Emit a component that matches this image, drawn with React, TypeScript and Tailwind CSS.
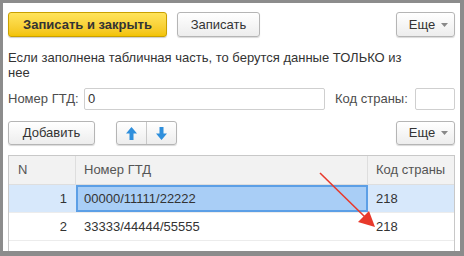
import React from "react";

const btn =
  "flex items-center justify-center h-[25px] rounded-[3px] border border-[#b5b5b5] bg-gradient-to-b from-white to-[#ededed] shadow-[0_1px_1px_rgba(0,0,0,0.15)] text-[13px] text-[#333]";

function MoreButton({ h }: { h: string }) {
  return (
    <button className={`${btn} ${h} w-[59px] gap-[6px] pl-[6px]`}>
      <span>Еще</span>
      <svg width="7" height="4" viewBox="0 0 7 4">
        <path d="M0 0h7L3.5 4z" fill="#888" />
      </svg>
    </button>
  );
}

function Arrow({ down }: { down?: boolean }) {
  return (
    <svg width="11" height="13" viewBox="0 0 11 13" className={down ? "rotate-180" : ""}>
      <path d="M5.5 0L11 6.5H7.5V13h-4V6.5H0z" fill="#2f8fdc" />
    </svg>
  );
}

const rows = [
  { n: 1, gtd: "00000/11111/22222", code: "218", selected: true },
  { n: 2, gtd: "33333/44444/55555", code: "218", selected: false },
];

export default function App() {
  return (
    <div
      className="w-[464px] h-[256px] bg-[#8c8c8c] pt-[3px] pl-[3px] pr-[4px] pb-[5px] overflow-hidden"
      style={{ fontFamily: '"Liberation Sans", Arial, sans-serif' }}
    >
      <div className="relative h-full bg-white pt-[9px] pl-[5px] pr-[5px] flex flex-col text-[13px] text-[#333]">
        <div className="flex items-center">
          <button className="flex items-center justify-center h-[25px] w-[159px] rounded-[3px] border border-[#c9a000] bg-gradient-to-b from-[#ffe45a] to-[#f3c300] shadow-[0_1px_1px_rgba(0,0,0,0.2)] font-bold text-[13px] text-[#333]">
            Записать и закрыть
          </button>
          <button className={`${btn} w-[83px] ml-[10px]`}>Записать</button>
          <div className="ml-auto">
            <MoreButton h="h-[25px]" />
          </div>
        </div>

        <div className="mt-[13px] leading-[15px] pr-[40px]">
          Если заполнена табличная часть, то берутся данные ТОЛЬКО из нее
        </div>

        <div className="mt-[8px] flex items-center h-[22px]">
          <span className="text-[#4d4d4d] w-[76px]">Номер ГТД:</span>
          <div className="h-[22px] w-[241px] border border-[#cfcfcf] rounded-[2px] flex items-center pl-[3px]">
            0
          </div>
          <span className="ml-[10px] text-[#4d4d4d]">Код страны:</span>
          <div className="ml-auto h-[22px] w-[40px] border border-[#cfcfcf] rounded-[2px]" />
        </div>

        <div className="mt-[11px] flex items-center">
          <button className={`${btn} !h-[24px] w-[87px]`}>Добавить</button>
          <div className="ml-[21px] flex h-[24px] rounded-[3px] border border-[#b5b5b5] bg-gradient-to-b from-white to-[#ededed] shadow-[0_1px_1px_rgba(0,0,0,0.15)]">
            <div className="w-[30px] flex items-center justify-center border-r border-[#c8c8c8]">
              <Arrow />
            </div>
            <div className="w-[29px] flex items-center justify-center">
              <Arrow down />
            </div>
          </div>
          <div className="ml-auto">
            <MoreButton h="!h-[24px]" />
          </div>
        </div>

        <div className="mt-[10px] flex-1 border border-[#c8c8c8] border-b-0 flex flex-col">
          <div className="flex h-[29px] bg-[#f2f2f2] border-b border-[#dedede] text-[#555]">
            <div className="w-[67px] border-r border-[#dedede] flex items-center pl-[9px]">N</div>
            <div className="w-[292px] border-r border-[#dedede] flex items-center pl-[8px]">Номер ГТД</div>
            <div className="flex-1 flex items-center pl-[8px]">Код страны</div>
          </div>
          {rows.map((r) => (
            <div
              key={r.n}
              className={`flex h-[28px] border-b border-[#ececec] ${r.selected ? "bg-[#d7e8fb]" : ""}`}
            >
              <div className="w-[67px] flex items-center justify-end pr-[9px]">{r.n}</div>
              <div
                className={`w-[292px] flex items-center ${
                  r.selected ? "bg-[#a9cef6] border-2 border-[#5c9fe6] pl-[6px]" : "pl-[8px]"
                }`}
              >
                {r.gtd}
              </div>
              <div className="flex-1 flex items-center pl-[8px]">{r.code}</div>
            </div>
          ))}
        </div>

        <svg
          className="absolute left-0 top-0 pointer-events-none"
          width="457"
          height="248"
          viewBox="0 0 457 248"
        >
          <line x1="317" y1="170" x2="362" y2="214" stroke="#e8392b" strokeWidth="1.6" />
          <path d="M372 224L355 219L366 208z" fill="#e8392b" />
        </svg>
      </div>
    </div>
  );
}
